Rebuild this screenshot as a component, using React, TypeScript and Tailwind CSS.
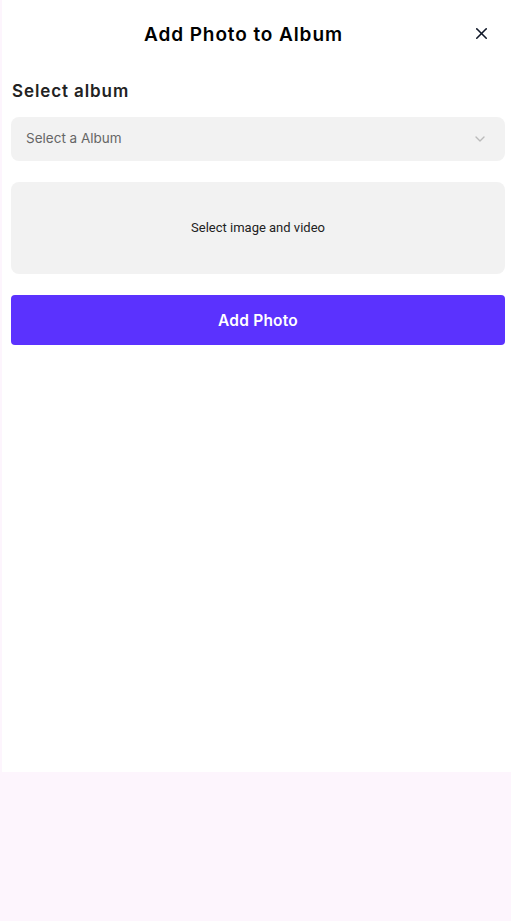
import { X, ChevronDown } from 'lucide-react'

export default function App() {
  return (
    <div className="min-h-[921px] bg-[#fdf5fd] pl-[2px] font-['Inter',sans-serif]">
      <main className="h-[772px] bg-white">
        <header className="relative flex h-[68px] items-center justify-center pt-[2px] pr-[26px]">
          <h1 className="text-[19px] font-semibold text-black tracking-[0.9px]">Add Photo to Album</h1>
          <button className="absolute right-[20px] top-[24px] text-gray-900">
            <X size={19} strokeWidth={2} />
          </button>
        </header>

        <div className="pl-[9px] pr-[6px]">
          <h2 className="mt-[11px] ml-[1px] text-[17px] font-semibold text-[#222] tracking-[0.9px]">Select album</h2>

          <button className="mt-[12px] flex h-[44px] w-full items-center justify-between rounded-lg bg-[#f2f2f2] pl-[15px] pr-[17px]">
            <span className="text-[13.5px] text-[#666]">Select a Album</span>
            <ChevronDown size={16} className="text-[#bbb]" />
          </button>

          <div className="mt-[21px] flex h-[92px] items-center justify-center rounded-lg bg-[#f2f2f2]">
            <span className="font-['Roboto',sans-serif] text-[13px] text-[#222]">Select image and video</span>
          </div>

          <button className="mt-[21px] flex h-[50px] w-full items-center justify-center rounded-[4px] bg-[#5b32fe] pt-[2px] text-[15.5px] font-semibold tracking-[0.2px] text-white">
            Add Photo
          </button>
        </div>
      </main>
    </div>
  )
}
